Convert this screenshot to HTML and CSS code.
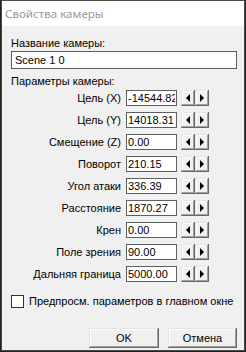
FILE: index.html
```html
<!DOCTYPE html>
<html>
<head>
<meta charset="utf-8">
<link rel="stylesheet" href="styles.css">
</head>
<body>
<div class="window">
  <div class="titlebar">Свойства камеры</div>
  <div class="content">
    <div class="label first">Название камеры:</div>
    <input class="name" type="text" value="Scene 1 0">
    <div class="label second">Параметры камеры:</div>
    <div class="rows">
      <div class="row"><span class="rlabel">Цель (X)</span><input class="num" type="text" value="-14544.82"><span class="spin"><span class="sbtn"><span class="arr left"></span></span><span class="sbtn"><span class="arr right"></span></span></span></div>
      <div class="row"><span class="rlabel">Цель (Y)</span><input class="num" type="text" value="14018.31"><span class="spin"><span class="sbtn"><span class="arr left"></span></span><span class="sbtn"><span class="arr right"></span></span></span></div>
      <div class="row"><span class="rlabel">Смещение (Z)</span><input class="num" type="text" value="0.00"><span class="spin"><span class="sbtn"><span class="arr left"></span></span><span class="sbtn"><span class="arr right"></span></span></span></div>
      <div class="row"><span class="rlabel">Поворот</span><input class="num" type="text" value="210.15"><span class="spin"><span class="sbtn"><span class="arr left"></span></span><span class="sbtn"><span class="arr right"></span></span></span></div>
      <div class="row"><span class="rlabel">Угол атаки</span><input class="num" type="text" value="336.39"><span class="spin"><span class="sbtn"><span class="arr left"></span></span><span class="sbtn"><span class="arr right"></span></span></span></div>
      <div class="row"><span class="rlabel">Расстояние</span><input class="num" type="text" value="1870.27"><span class="spin"><span class="sbtn"><span class="arr left"></span></span><span class="sbtn"><span class="arr right"></span></span></span></div>
      <div class="row"><span class="rlabel">Крен</span><input class="num" type="text" value="0.00"><span class="spin"><span class="sbtn"><span class="arr left"></span></span><span class="sbtn"><span class="arr right"></span></span></span></div>
      <div class="row"><span class="rlabel">Поле зрения</span><input class="num" type="text" value="90.00"><span class="spin"><span class="sbtn"><span class="arr left"></span></span><span class="sbtn"><span class="arr right"></span></span></span></div>
      <div class="row"><span class="rlabel">Дальняя граница</span><input class="num" type="text" value="5000.00"><span class="spin"><span class="sbtn"><span class="arr left"></span></span><span class="sbtn"><span class="arr right"></span></span></span></div>
    </div>
    <label class="check"><span class="box"></span><span class="ctext">Предпросм. параметров в главном окне</span></label>
    <div class="buttons">
      <span class="btn ok">OK</span>
      <span class="btn cancel">Отмена</span>
    </div>
  </div>
</div>
</body>
</html>
```

FILE: styles.css
```css
html, body {
  margin: 0;
  padding: 0;
}
body {
  background: #1d251d;
  width: 246px;
  height: 352px;
  overflow: hidden;
  padding-left: 1px;
  box-sizing: border-box;
  font-family: "Liberation Sans", Arial, sans-serif;
  font-size: 11px;
  color: #000;
}
.window {
  width: 244px;
  height: 351px;
  box-sizing: border-box;
  border: 1px solid #4a4a4a;
  display: flex;
  flex-direction: column;
}
.titlebar {
  height: 25px;
  flex: none;
  background: #fff;
  color: #9a9a9a;
  font-family: "Noto Sans", "Open Sans", sans-serif;
  font-size: 11.6px;
  line-height: 25px;
  padding-left: 3px;
}
.content {
  flex: 1;
  background: #f0f0f0;
  padding: 0 6px 0 9px;
  display: flex;
  flex-direction: column;
}
.label {
  line-height: 13px;
  height: 13px;
}
.label.first {
  margin-top: 11px;
}
.name {
  margin: 1px 0 0 0;
  width: 226px;
  height: 18px;
  box-sizing: border-box;
  border: 1px solid #5f5f5f;
  background: #fff;
  font-family: "Liberation Sans", Arial, sans-serif;
  font-size: 11px;
  padding: 0 3px;
  color: #000;
  outline: none;
}
.label.second {
  margin-top: 6px;
}
.rows {
  margin-top: 2px;
  display: flex;
  flex-direction: column;
  gap: 6px;
}
.row {
  display: flex;
  align-items: center;
  height: 16px;
}
.rlabel {
  width: 110px;
  text-align: right;
  margin-right: 5px;
  line-height: 16px;
  white-space: nowrap;
}
.num {
  width: 51px;
  height: 16px;
  box-sizing: border-box;
  border: 1px solid #5f5f5f;
  background: #fff;
  margin: 0;
  padding: 0 1px;
  font-family: "Liberation Sans", Arial, sans-serif;
  font-size: 11px;
  color: #000;
  outline: none;
}
.spin {
  display: flex;
  margin-left: 4px;
}
.sbtn {
  width: 14px;
  height: 16px;
  box-sizing: border-box;
  background: #f0f0f0;
  box-shadow: inset -1px -1px #696969, inset 1px 1px #e3e3e3, inset -2px -2px #a0a0a0, inset 2px 2px #fff;
  display: flex;
  align-items: center;
  justify-content: center;
}
.arr {
  width: 0;
  height: 0;
  border-top: 4px solid transparent;
  border-bottom: 4px solid transparent;
}
.arr.left {
  border-right: 4px solid #000;
  margin-right: 1px;
}
.arr.right {
  border-left: 4px solid #000;
}
.check {
  margin-top: 13px;
  display: flex;
  align-items: center;
  height: 13px;
}
.box {
  width: 13px;
  height: 13px;
  box-sizing: border-box;
  border: 1px solid #333;
  background: #fff;
  margin-left: 0;
  margin-right: 5px;
}
.ctext {
  line-height: 13px;
  white-space: nowrap;
}
.buttons {
  margin-top: 20px;
  display: flex;
  justify-content: flex-end;
  gap: 9px;
  padding-right: 1px;
}
.btn {
  height: 20px;
  box-sizing: border-box;
  background: #f0f0f0;
  box-shadow: inset -1px -1px #696969, inset 1px 1px #e3e3e3, inset -2px -2px #a0a0a0, inset 2px 2px #fff;
  display: flex;
  align-items: center;
  justify-content: center;
  line-height: 20px;
}
.btn.ok {
  width: 70px;
}
.btn.cancel {
  width: 69px;
}
```
